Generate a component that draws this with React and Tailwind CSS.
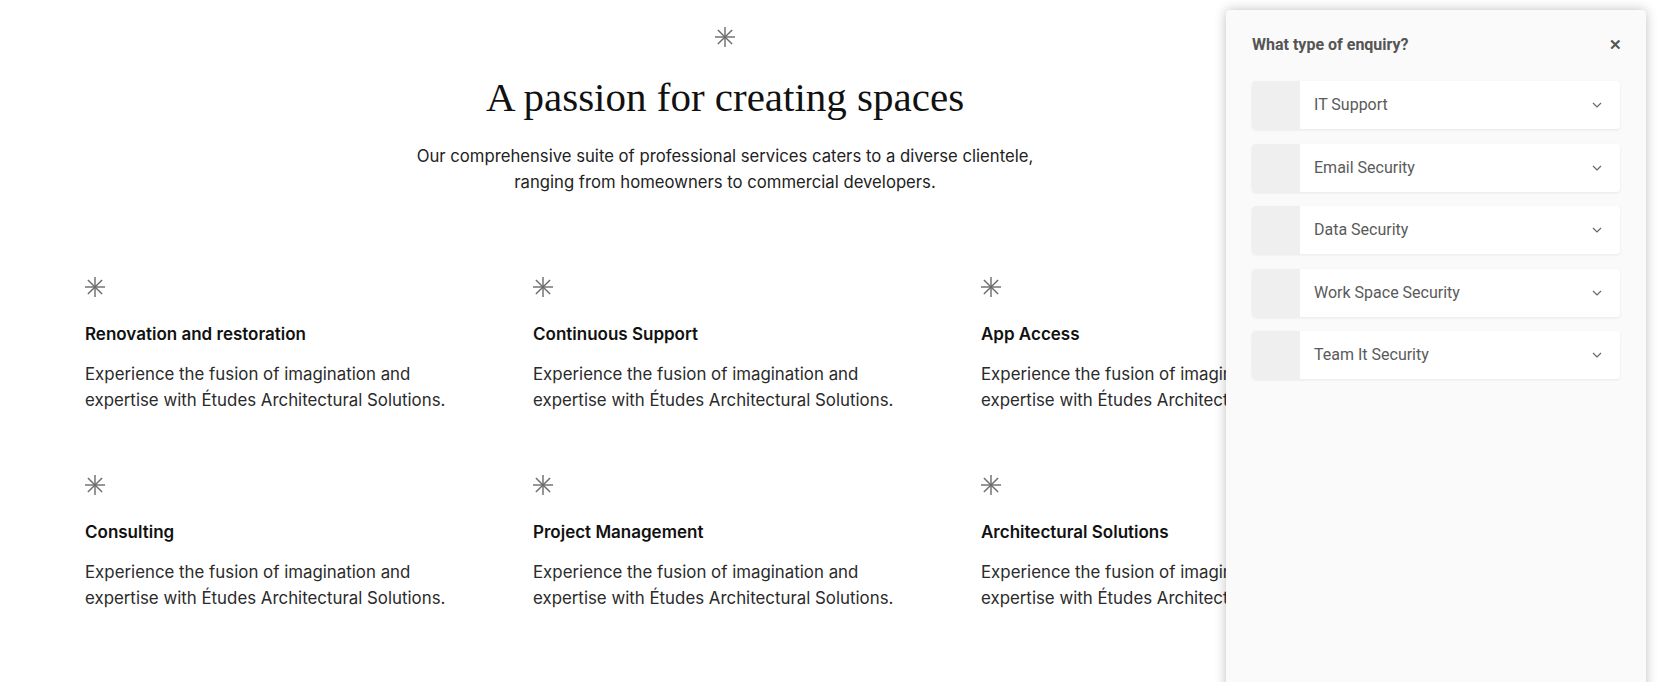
import React from "react";

function Star({ className = "" }) {
  return (
    <svg viewBox="0 0 20 20" className={className} fill="none" stroke="#6b6b6b" strokeWidth="1.4" strokeLinecap="butt">
      <line x1="10" y1="0" x2="10" y2="20" />
      <line x1="0" y1="10" x2="20" y2="10" />
      <line x1="2.9" y1="2.9" x2="17.1" y2="17.1" />
      <line x1="17.1" y1="2.9" x2="2.9" y2="17.1" />
    </svg>
  );
}

function Chevron() {
  return (
    <svg viewBox="0 0 10 6" className="w-[10px] h-[6px]" fill="none" stroke="#666" strokeWidth="1.2">
      <polyline points="1,1 5,5 9,1" />
    </svg>
  );
}

const cards = [
  "Renovation and restoration",
  "Continuous Support",
  "App Access",
  "Consulting",
  "Project Management",
  "Architectural Solutions",
];

const options = ["IT Support", "Email Security", "Data Security", "Work Space Security", "Team It Security"];

export default function App() {
  return (
    <div className="relative w-full h-[682px] overflow-hidden bg-white" style={{ fontFamily: "Inter, 'Noto Sans', sans-serif" }}>
      <div className="ml-[85px] w-[1280px] pt-[27px]">
        <div className="flex flex-col items-center">
          <Star className="w-[20px] h-[20px]" />
          <h1 className="mt-[22px] text-[41px] leading-[56px] text-[#111] font-normal" style={{ fontFamily: "'Liberation Serif', 'DejaVu Serif', serif" }}>
            A passion for creating spaces
          </h1>
          <p className="mt-[18px] text-center text-[16.7px] leading-[26px] text-[#222]">
            Our comprehensive suite of professional services caters to a diverse clientele,
            <br />
            ranging from homeowners to commercial developers.
          </p>
        </div>
        <div className="mt-[82px] grid grid-cols-3 gap-x-[64px] gap-y-[62px]">
          {cards.map((t) => (
            <div key={t} className="flex flex-col">
              <Star className="w-[20px] h-[20px]" />
              <h3 className="mt-[25px] text-[17px] leading-[24px] font-semibold text-[#111]">{t}</h3>
              <p className="mt-[15px] text-[16.85px] leading-[26px] text-[#2a2a2a]">
                Experience the fusion of imagination and
                <br />
                expertise with Études Architectural Solutions.
              </p>
            </div>
          ))}
        </div>
      </div>

      <div
        className="absolute left-[1226px] top-[10px] w-[420px] h-[720px] bg-[#fafafa] rounded-t-[4px] shadow-[0_0_12px_rgba(0,0,0,0.25)] pl-[26px] pr-[24px]"
        style={{ fontFamily: "Roboto, 'Liberation Sans', sans-serif" }}
      >
        <div className="flex items-center justify-between h-[70px]">
          <span className="text-[16px] font-bold text-[#555]">What type of enquiry?</span>
          <span className="text-[15px] font-bold text-[#555] leading-none">✕</span>
        </div>
        <div className="mt-[1px] flex flex-col gap-[14.6px]">
          {options.map((o) => (
            <div key={o} className="flex h-[48px] w-[368px] rounded-[4px] bg-white shadow-[0_1px_3px_rgba(0,0,0,0.08)] overflow-hidden">
              <div className="w-[48px] h-full bg-[#efefef]" />
              <div className="flex-1 flex items-center justify-between pl-[14px] pr-[18px]">
                <span className="text-[16px] text-[#5a5a5a]">{o}</span>
                <Chevron />
              </div>
            </div>
          ))}
        </div>
      </div>
    </div>
  );
}
